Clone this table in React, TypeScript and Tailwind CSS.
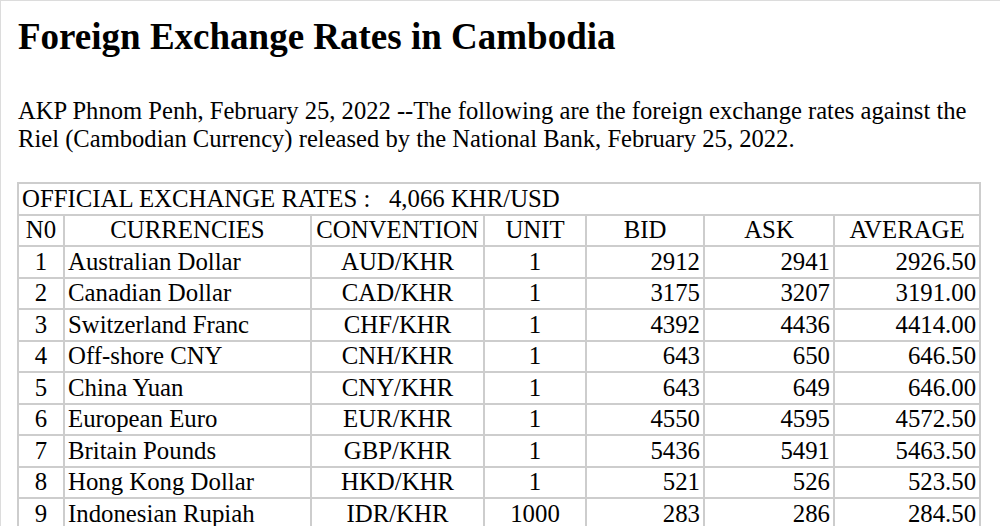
import React from "react";

const rows: [string, string, string, string, string, string, string][] = [
  ["1", "Australian Dollar", "AUD/KHR", "1", "2912", "2941", "2926.50"],
  ["2", "Canadian Dollar", "CAD/KHR", "1", "3175", "3207", "3191.00"],
  ["3", "Switzerland Franc", "CHF/KHR", "1", "4392", "4436", "4414.00"],
  ["4", "Off-shore CNY", "CNH/KHR", "1", "643", "650", "646.50"],
  ["5", "China Yuan", "CNY/KHR", "1", "643", "649", "646.00"],
  ["6", "European Euro", "EUR/KHR", "1", "4550", "4595", "4572.50"],
  ["7", "Britain Pounds", "GBP/KHR", "1", "5436", "5491", "5463.50"],
  ["8", "Hong Kong Dollar", "HKD/KHR", "1", "521", "526", "523.50"],
  ["9", "Indonesian Rupiah", "IDR/KHR", "1000", "283", "286", "284.50"],
];

export default function App() {
  const cell = "border-2 border-[#cdcdcd] px-[3px] h-[31.5px] leading-[26px] whitespace-nowrap";
  return (
    <div
      className="w-[1000px] h-[526px] overflow-hidden bg-white border-t border-l border-[#dcdcdc] text-black pl-[16px]"
      style={{ fontFamily: '"Liberation Serif", "Times New Roman", serif' }}
    >
      <h1 className="text-[37px] font-bold leading-[42px] pt-[15px] pl-[1px]">
        Foreign Exchange Rates in Cambodia
      </h1>
      <p className="text-[24.6px] leading-[28px] mt-[39px] pl-[1px] w-[975px]">
        AKP Phnom Penh, February 25, 2022 --The following are the foreign exchange rates against the
        Riel (Cambodian Currency) released by the National Bank, February 25, 2022.
      </p>
      <table className="mt-[29px] border-collapse table-fixed w-[962px] text-[24.8px]">
        <colgroup>
          <col className="w-[46px]" />
          <col className="w-[247px]" />
          <col className="w-[173px]" />
          <col className="w-[102px]" />
          <col className="w-[118px]" />
          <col className="w-[130px]" />
          <col className="w-[146px]" />
        </colgroup>
        <tbody>
          <tr>
            <td colSpan={7} className={cell + " text-left"}>
              OFFICIAL EXCHANGE RATES :&nbsp;&nbsp; 4,066 KHR/USD
            </td>
          </tr>
          <tr>
            <td className={cell + " text-center"}>N0</td>
            <td className={cell + " text-center"}>CURRENCIES</td>
            <td className={cell + " text-center"}>CONVENTION</td>
            <td className={cell + " text-center"}>UNIT</td>
            <td className={cell + " text-center"}>BID</td>
            <td className={cell + " text-center"}>ASK</td>
            <td className={cell + " text-center"}>AVERAGE</td>
          </tr>
          {rows.map((r) => (
            <tr key={r[0]}>
              <td className={cell + " text-center"}>{r[0]}</td>
              <td className={cell + " text-left"}>{r[1]}</td>
              <td className={cell + " text-center"}>{r[2]}</td>
              <td className={cell + " text-center"}>{r[3]}</td>
              <td className={cell + " text-right"}>{r[4]}</td>
              <td className={cell + " text-right"}>{r[5]}</td>
              <td className={cell + " text-right"}>{r[6]}</td>
            </tr>
          ))}
        </tbody>
      </table>
    </div>
  );
}
